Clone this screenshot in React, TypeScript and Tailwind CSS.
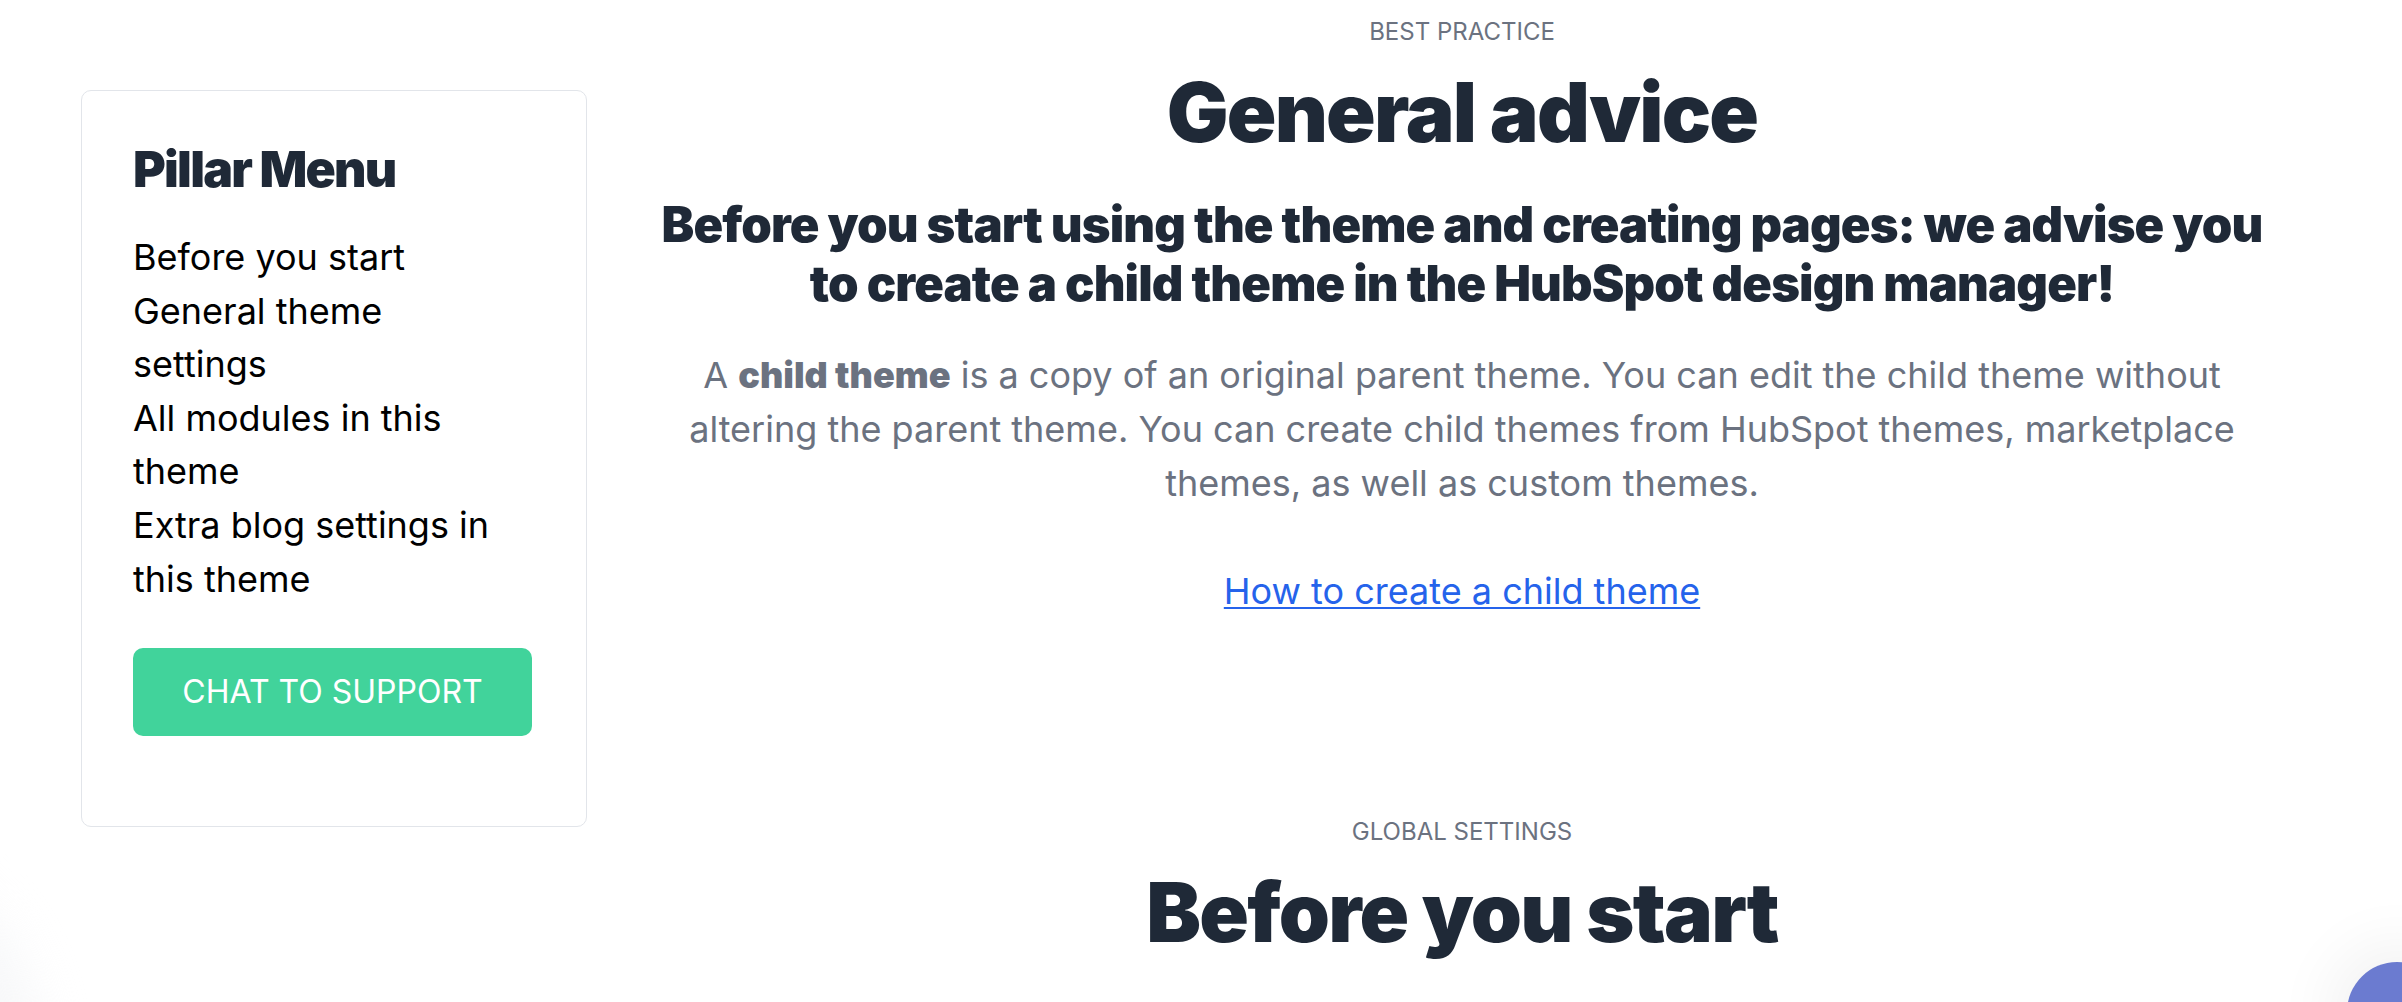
import React from 'react'

const menuItems = [
  'Before you start',
  'General theme settings',
  'All modules in this theme',
  'Extra blog settings in this theme',
]

function PillarMenu() {
  return (
    <div className="w-[506px] rounded-[10px] border border-[#e2e5ea] bg-white px-[51px] pt-[48px] pb-[90px]">
      <h3 className="text-[50px] leading-[60px] font-black tracking-[-0.035em] text-[#1f2937]">Pillar Menu</h3>
      <ul className="mt-[32px] w-[372px] text-[36px] leading-[53.6px] text-black">
        {menuItems.map((item) => (
          <li key={item}>
            <a href="#">{item}</a>
          </li>
        ))}
      </ul>
      <button className="mt-[42px] flex h-[88px] w-[399px] items-center justify-center rounded-[10px] bg-[#41d39b] text-[32px] uppercase text-white">
        Chat to support
      </button>
    </div>
  )
}

function Eyebrow({ children }: { children: React.ReactNode }) {
  return <p className="text-[24px] leading-[33px] uppercase text-[#6b7280]">{children}</p>
}

export default function App() {
  return (
    <div className="relative h-screen overflow-hidden bg-white font-['Inter',sans-serif]">
      <div className="flex">
        <aside className="shrink-0 pl-[81px] pt-[90px]">
          <PillarMenu />
        </aside>

        <main className="flex-1 pl-[55px] pr-[120px] pt-[15px] text-center">
          <section>
            <Eyebrow>Best practice</Eyebrow>
            <h2 className="mt-[20px] text-[82px] leading-[90px] font-black tracking-[-0.022em] text-[#1f2937]">
              General advice
            </h2>
            <h3 className="mx-auto mt-[37px] max-w-[1625px] text-[49px] leading-[59px] font-black tracking-[-0.018em] text-[#1f2937]">
              Before you start using the theme and creating pages: we advise you to create a child theme in the
              HubSpot design manager!
            </h3>
            <p className="mx-auto mt-[35px] max-w-[1580px] text-[36px] leading-[54px] text-[#6b7280]">
              A <strong className="font-black">child theme</strong> is a copy of an original parent theme. You
              can edit the child theme without altering the parent theme. You can create child themes from HubSpot
              themes, marketplace themes, as well as custom themes.
            </p>
            <p className="mt-[54px] text-[36px] leading-[54px]">
              <a href="#" className="text-[#2563eb] underline decoration-2 underline-offset-[3px]">
                How to create a child theme
              </a>
            </p>
          </section>

          <section className="mt-[197px]">
            <Eyebrow>Global settings</Eyebrow>
            <h2 className="mt-[20px] text-[82px] leading-[90px] font-black tracking-[-0.022em] text-[#1f2937]">
              Before you start
            </h2>
          </section>
        </main>
      </div>

      {/* floating widgets peeking in at the corners */}
      <div className="pointer-events-none absolute bottom-[-260px] left-[-380px] h-[420px] w-[420px] rounded-full bg-[#f4f5f7] opacity-70 blur-[24px]" />
      <div className="absolute bottom-[-60px] right-[-45px] h-[100px] w-[100px] rounded-full bg-[#6b7bd0] shadow-[0_0_60px_20px_rgba(0,0,0,0.05)]" />
    </div>
  )
}
